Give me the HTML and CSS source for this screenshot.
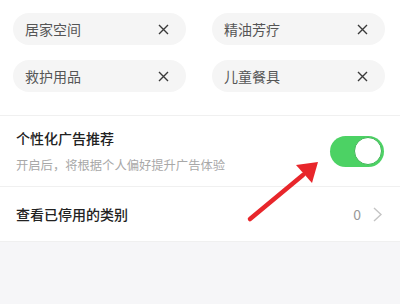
FILE: index.html
```html
<html>
<head>
<meta charset="UTF-8">
<link rel="stylesheet" href="styles.css">
</head>
<body>

<div class="chips">
   <div class="chip"><span>居家空间</span><svg class="close" width="11" height="11" viewBox="0 0 11 11"><path d="M1 1L10 10M10 1L1 10"/></svg></div>
   <div class="chip"><span>精油芳疗</span><svg class="close" width="11" height="11" viewBox="0 0 11 11"><path d="M1 1L10 10M10 1L1 10"/></svg></div>
   <div class="chip"><span>救护用品</span><svg class="close" width="11" height="11" viewBox="0 0 11 11"><path d="M1 1L10 10M10 1L1 10"/></svg></div>
   <div class="chip"><span>儿童餐具</span><svg class="close" width="11" height="11" viewBox="0 0 11 11"><path d="M1 1L10 10M10 1L1 10"/></svg></div>
</div>

<div class="row toggleRow">
   <div class="texts">
      <div class="title">个性化广告推荐</div>
      <div class="sub">开启后，将根据个人偏好提升广告体验</div>
   </div>
   <div class="switch"><div class="knob"></div></div>
</div>

<div class="row linkRow">
   <div class="title">查看已停用的类别</div>
   <div class="count">0<svg class="chev" width="9" height="15" viewBox="0 0 9 15"><path d="M1 1L8 7.5L1 14"/></svg></div>
</div>

<div class="bottom"></div>

<svg class="arrow" width="400" height="304" viewBox="0 0 400 304">
   <line x1="250" y1="219" x2="303" y2="175" stroke="#e8262b" stroke-width="4.5" stroke-linecap="round"/>
   <polygon points="318,162 296,165 312,183" fill="#e8262b"/>
</svg>

</body>
</html>
```

FILE: styles.css
```css
body {
   margin: 0;
   background: #ffffff;
   font-family: "Noto Sans CJK SC", "Noto Sans", sans-serif;
   position: relative;
   width: 400px;
   height: 304px;
   overflow: hidden;
}
.chips {
   display: grid;
   grid-template-columns: 173px 173px;
   column-gap: 26px;
   row-gap: 15px;
   padding: 13px 15px 23px 13px;
   border-bottom: 1px solid #f0f0f0;
}
.chip {
   height: 32px;
   background: #f5f5f5;
   border-radius: 16px;
   display: flex;
   align-items: center;
   justify-content: space-between;
   padding: 0 17px 0 12px;
   font-size: 14px;
   color: #555555;
}
.close {
   fill: none;
   stroke: #3a3a3a;
   stroke-width: 1.4;
}
.row {
   display: flex;
   align-items: center;
   justify-content: space-between;
   padding: 0 18px 0 16px;
   border-bottom: 1px solid #f0f0f0;
}
.toggleRow {
   height: 70px;
   padding-right: 16px;
}
.linkRow {
   height: 54px;
}
.title {
   font-size: 14px;
   font-weight: 500;
   color: #222222;
}
.sub {
   font-size: 12.3px;
   color: #a8a8a8;
   margin-top: 8px;
}
.switch {
   width: 54px;
   height: 31px;
   background: #4cd264;
   border-radius: 16px;
   display: flex;
   align-items: center;
   justify-content: flex-end;
   padding-right: 2px;
   box-sizing: border-box;
}
.knob {
   width: 28px;
   height: 28px;
   border-radius: 50%;
   background: #ffffff;
   border: 1px solid #3fb556;
   box-sizing: border-box;
}
.count {
   font-size: 14px;
   color: #999999;
   display: flex;
   align-items: center;
}
.chev {
   fill: none;
   stroke: #c4c4c4;
   stroke-width: 1.4;
   margin-left: 12px;
}
.bottom {
   height: 64px;
   background: #f6f6f8;
}
.arrow {
   position: absolute;
   left: 0;
   top: 0;
}
```
